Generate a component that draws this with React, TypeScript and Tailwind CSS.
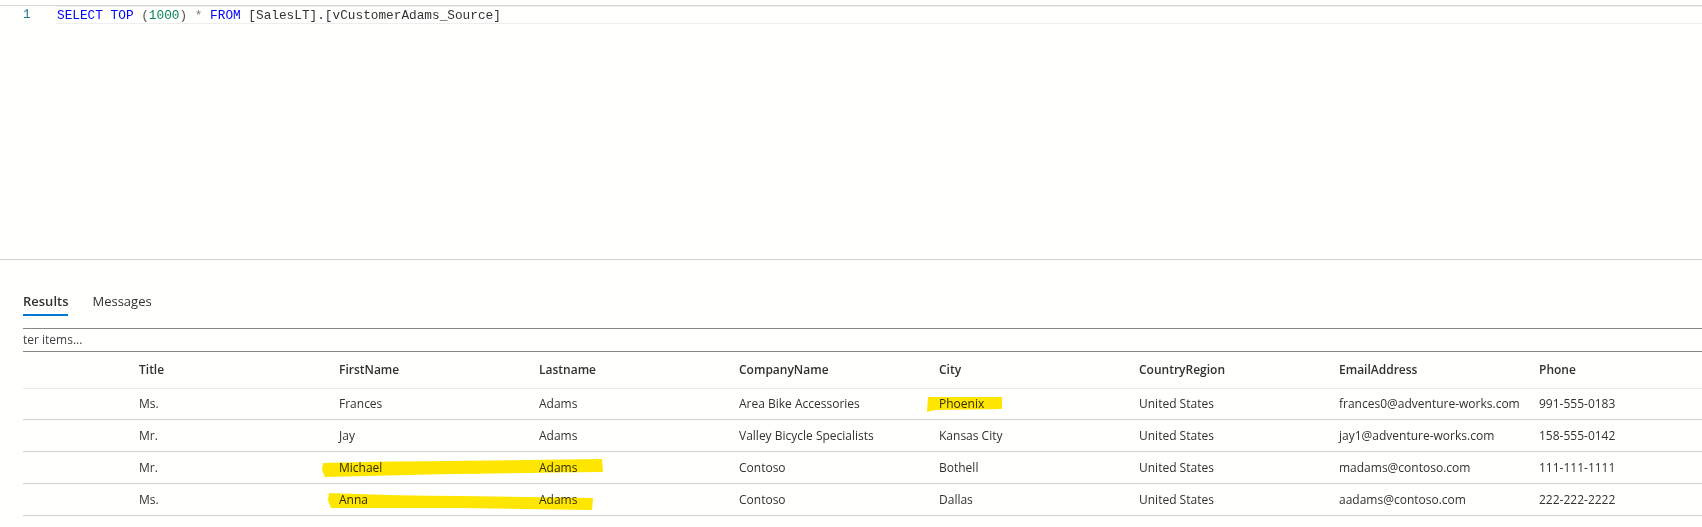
import React from 'react';

const columns = ['Title', 'FirstName', 'Lastname', 'CompanyName', 'City', 'CountryRegion', 'EmailAddress', 'Phone'];

const rows = [
  ['Ms.', 'Frances', 'Adams', 'Area Bike Accessories', 'Phoenix', 'United States', 'frances0@adventure-works.com', '991-555-0183'],
  ['Mr.', 'Jay', 'Adams', 'Valley Bicycle Specialists', 'Kansas City', 'United States', 'jay1@adventure-works.com', '158-555-0142'],
  ['Mr.', 'Michael', 'Adams', 'Contoso', 'Bothell', 'United States', 'madams@contoso.com', '111-111-1111'],
  ['Ms.', 'Anna', 'Adams', 'Contoso', 'Dallas', 'United States', 'aadams@contoso.com', '222-222-2222'],
];

const gridCols = 'grid grid-cols-[108px_200px_200px_200px_200px_200px_200px_200px_1fr]';

function Highlights() {
  // marker strokes drawn over the grid
  return (
    <svg
      className="absolute inset-0 pointer-events-none mix-blend-multiply"
      width={1702}
      height={527}
      viewBox="0 0 1702 527"
    >
      <path d="M928 397 L1002 397 L1002 409 L935 410 L927 412 Z" fill="#ffe600" />
      <path d="M323 463 Q 400 461 450 461 L602 459 L603 472 Q 520 473 450 474 L325 477 L322 470 Z" fill="#ffe600" />
      <path d="M329 493 Q 400 496 460 496 L593 498 L592 510 L460 508 L331 508 L328 500 Z" fill="#ffe600" />
    </svg>
  );
}

export default function App() {
  return (
    <div className="relative w-[1702px] h-[527px] overflow-hidden bg-[#fffffe] text-[#323130] font-['Open_Sans',sans-serif]">
      {/* Editor */}
      <div className="h-[5px]" />
      <div className="h-px bg-[#d9d9d9]" />
      <div className="flex h-[18px] font-['Liberation_Mono',monospace] text-[12.75px] leading-[17px]">
        <div className="w-[56px] pl-[23px] text-[#237893]">1</div>
        <div className="flex-1 border-t border-b border-[#eeeeee] pl-[1px] whitespace-pre">
          <span className="text-[#0000ff]">SELECT</span>{' '}
          <span className="text-[#0000ff]">TOP</span>{' '}
          <span className="text-[#555]">(</span>
          <span className="text-[#098658]">1000</span>
          <span className="text-[#555]">)</span>{' '}
          <span className="text-[#777]">*</span>{' '}
          <span className="text-[#0000ff]">FROM</span>{' '}
          <span className="text-[#333]">[SalesLT].[vCustomerAdams_Source]</span>
        </div>
      </div>
      <div className="h-[235px]" />
      <div className="h-px bg-[#d4d4d4]" />

      {/* Results panel */}
      <div className="pl-[23px]">
        <div className="flex gap-[24px] pt-[31px]">
          <div className="flex flex-col">
            <span className="text-[13px] leading-[20px] font-semibold">Results</span>
            <div className="mt-[3px] h-[2px] bg-[#0078d4]" />
          </div>
          <div className="flex flex-col">
            <span className="text-[13px] leading-[20px]">Messages</span>
          </div>
        </div>

        <div className="mt-[12px] h-[23px] border-t border-[#8a8886] text-[12px] leading-[22px] text-[#444]">
          ter items...
        </div>

        <div className="border-t border-[#8a8886] text-[12px]">
          <div className={`${gridCols} h-[37px] items-center border-b border-[#edebe9] font-semibold`}>
            <div />
            {columns.map((c) => (
              <div key={c} className="pl-[8px] whitespace-nowrap">{c}</div>
            ))}
          </div>
          {rows.map((r, i) => (
            <div
              key={i}
              className={`${gridCols} ${i === 0 ? 'h-[31px]' : 'h-[32px]'} items-center border-b border-[#d2d0ce]`}
            >
              <div />
              {r.map((v, j) => (
                <div key={j} className="pl-[8px] whitespace-nowrap">{v}</div>
              ))}
            </div>
          ))}
        </div>
      </div>

      <Highlights />
    </div>
  );
}
